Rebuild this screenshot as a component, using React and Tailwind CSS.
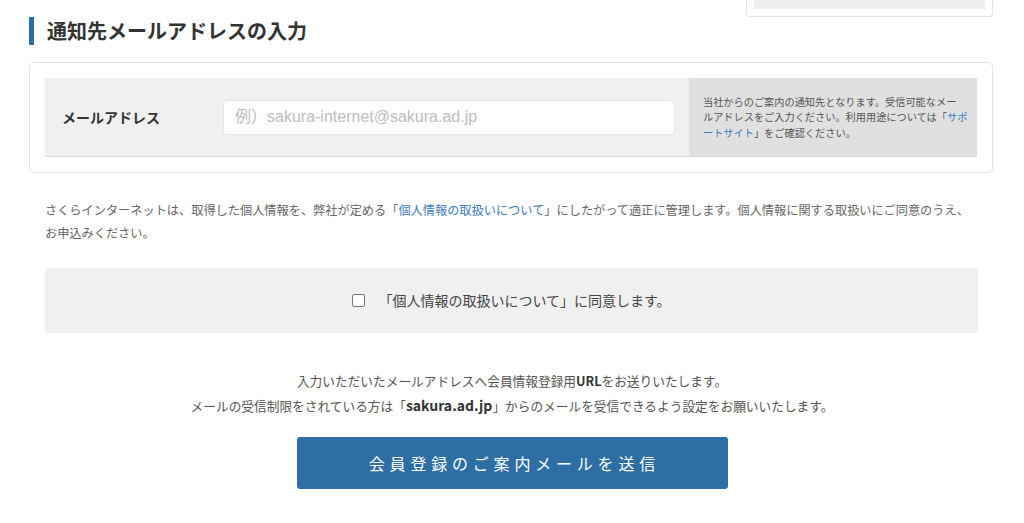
export default function App() {
  const font = { fontFamily: '"Noto Sans CJK JP", "Noto Sans", sans-serif' };
  return (
    <div className="w-[1024px] h-[523px] overflow-hidden bg-white" style={font}>
      <div className="flex justify-end pr-[31px]">
        <div className="w-[247px] h-[17px] border border-t-0 border-[#e3e3e3] rounded-b-[4px] px-[7px] pb-[7px]">
          <div className="h-full bg-[#efefef]" />
        </div>
      </div>

      <div className="ml-[29px] flex items-center h-[28px]">
        <div className="w-[5px] h-[28px] bg-[#2a6ea8]" />
        <h2 className="ml-[13px] text-[20px] font-bold text-[#333] leading-none">通知先メールアドレスの入力</h2>
      </div>

      <div className="ml-[29px] mt-[17px] w-[964px] border border-[#e3e3e3] rounded-[5px] px-[15px] pt-[15px] pb-[15px]">
        <div className="flex h-[79px] bg-[#f0f0f0] border-b border-[#d8d8d8]">
          <div className="w-[178px] flex items-center pl-[17px] text-[14px] font-bold text-[#333]">メールアドレス</div>
          <div className="flex items-center">
            <div className="w-[452px] h-[35px] bg-white rounded-[4px] border border-[#e6e6e6] flex items-center pl-[11px] text-[16px] text-[#bdbdbd]" style={{ fontFamily: '"Liberation Sans", "Noto Sans CJK JP", sans-serif' }}>
              例）sakura-internet@sakura.ad.jp
            </div>
          </div>
          <div className="ml-auto w-[288px] bg-[#e0e0e0] flex items-center pl-[14px] text-[10.2px] leading-[15.5px] text-[#555]">
            <p className="whitespace-nowrap">
              当社からのご案内の通知先となります。受信可能なメー<br />
              ルアドレスをご入力ください。利用用途については「<span className="text-[#3a7cc0]">サポ</span><br />
              <span className="text-[#3a7cc0]">ートサイト</span>」をご確認ください。
            </p>
          </div>
        </div>
      </div>

      <p className="ml-[45px] mt-[26px] text-[12.2px] leading-[23px] text-[#666]">
        さくらインターネットは、取得した個人情報を、弊社が定める「<span className="text-[#3a7cc0]">個人情報の取扱いについて</span>」にしたがって適正に管理します。個人情報に関する取扱いにご同意のうえ、<br />
        お申込みください。
      </p>

      <div className="ml-[45px] mt-[23px] w-[933px] h-[65px] bg-[#f0f0f0] rounded-[4px] flex items-center justify-center">
        <label className="flex items-center text-[14px] text-[#444]">
          <span className="w-[13px] h-[13px] border border-[#777] rounded-[2px] bg-white" />
          <span className="ml-[13px]">「個人情報の取扱いについて」に同意します。</span>
        </label>
      </div>

      <div className="mt-[36px] text-center text-[12.7px] leading-[24px] text-[#555]">
        <p>入力いただいたメールアドレスへ会員情報登録用<span className="font-bold text-[#333]">URL</span>をお送りいたします。</p>
        <p>メールの受信制限をされている方は「<span className="font-bold text-[14px] text-[#333]">sakura.ad.jp</span>」からのメールを受信できるよう設定をお願いいたします。</p>
      </div>

      <div className="mt-[19px] flex justify-center">
        <button className="w-[431px] h-[52px] bg-[#2d6fa5] rounded-[3px] text-white text-[16px] tracking-[0.3em] pl-[0.3em]">
          会員登録のご案内メールを送信
        </button>
      </div>
    </div>
  );
}
